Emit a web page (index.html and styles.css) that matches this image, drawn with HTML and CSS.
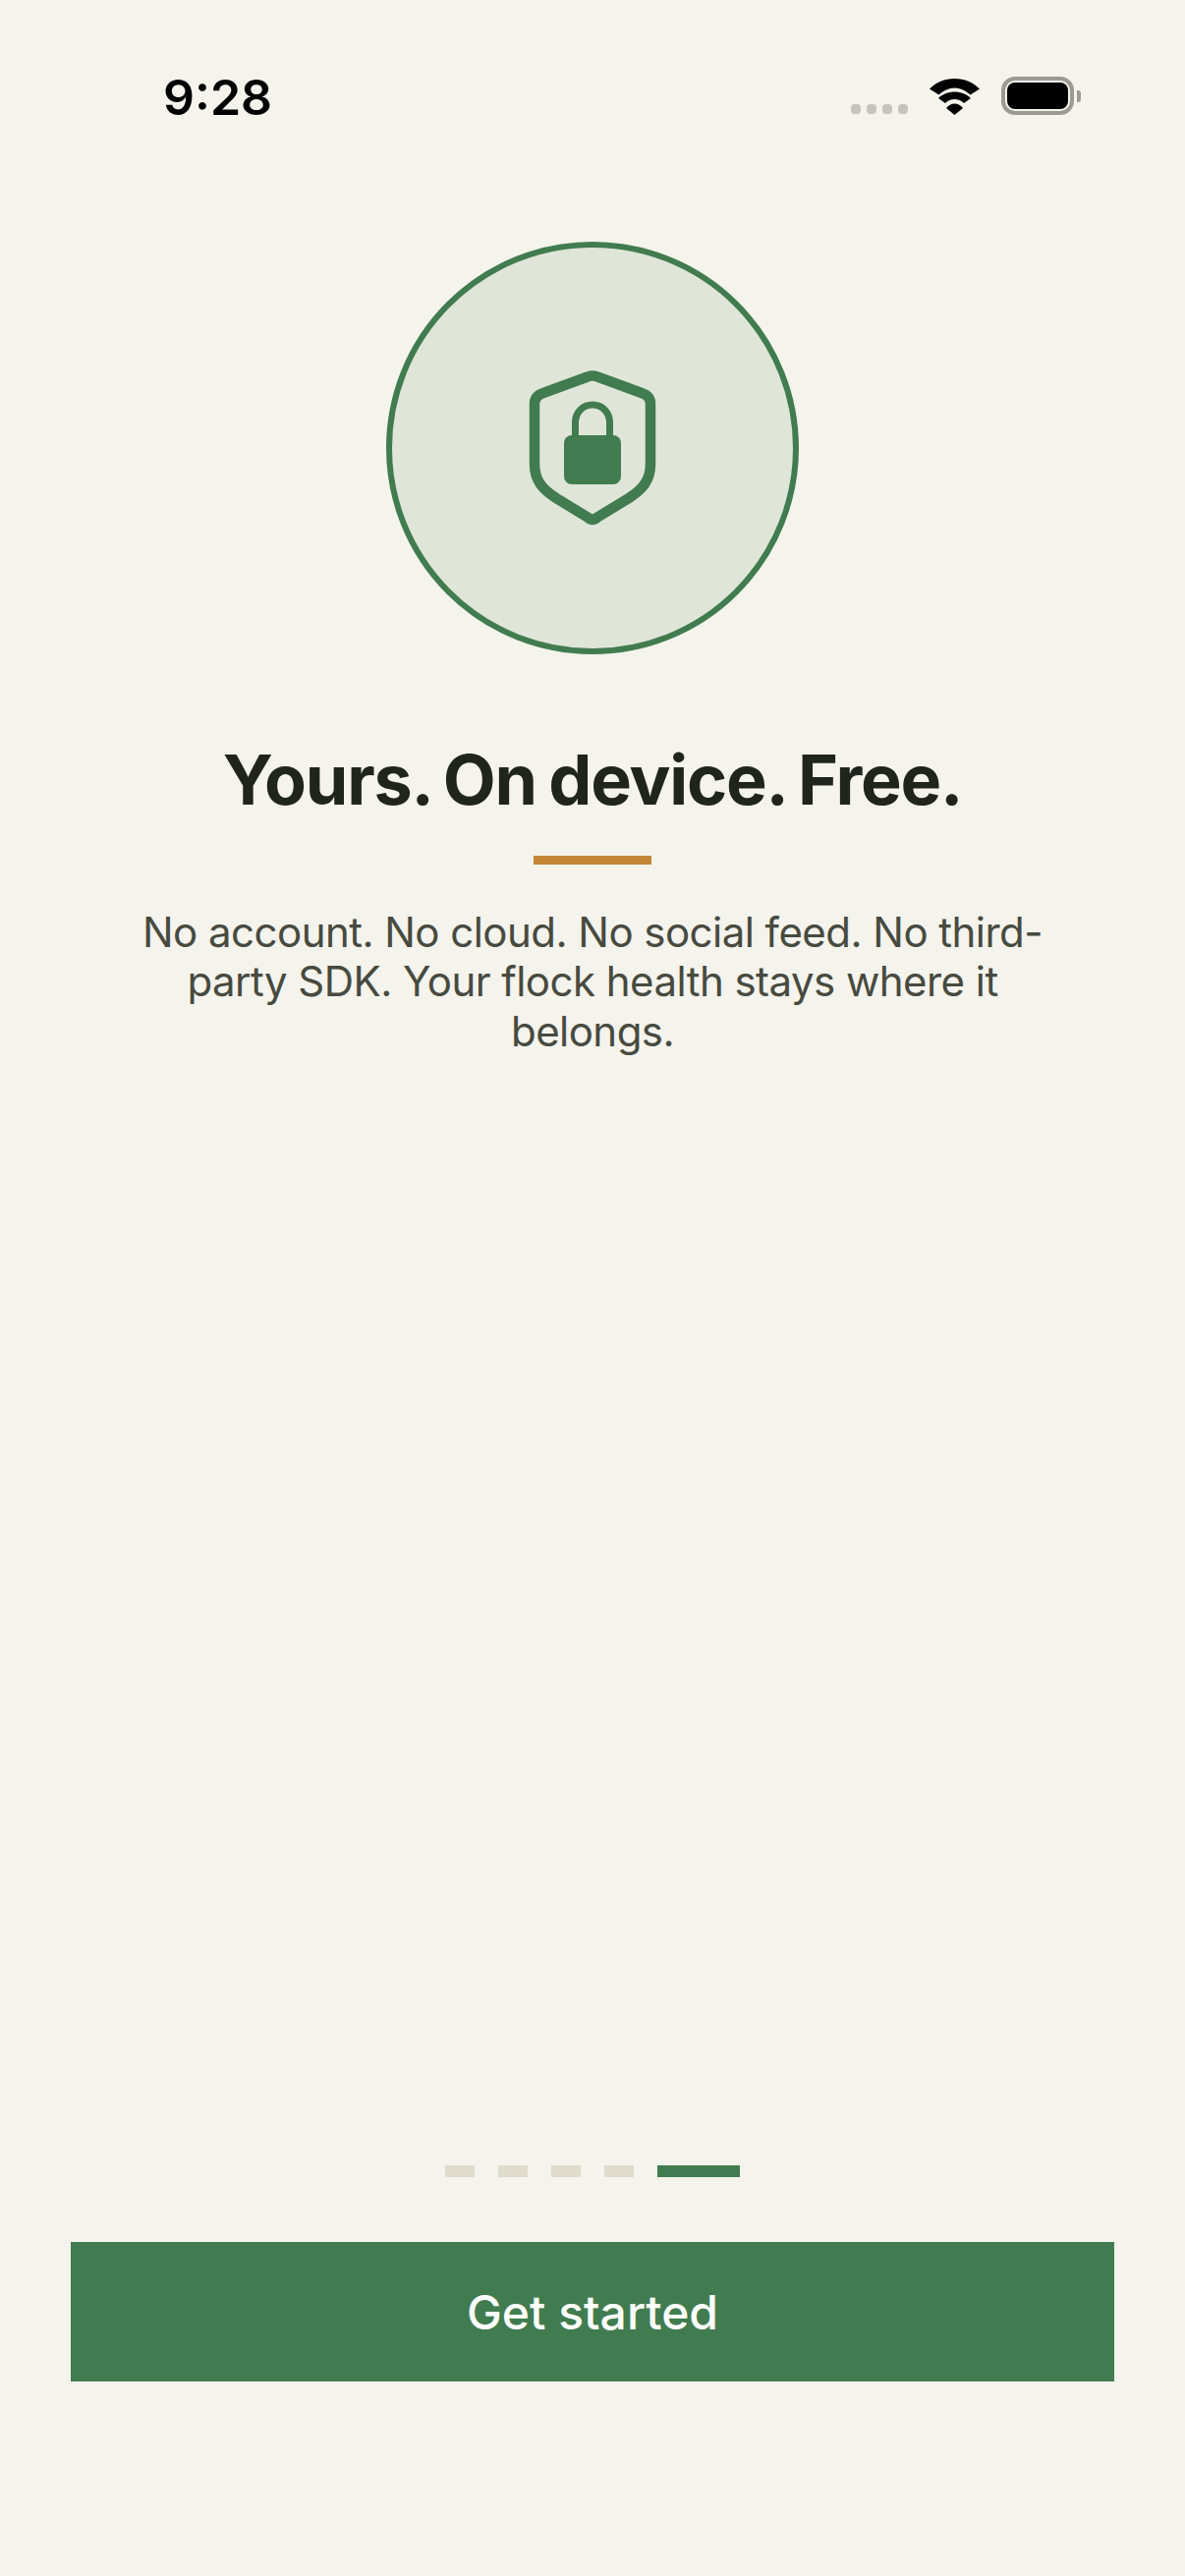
FILE: index.html
```html
<!DOCTYPE html>
<html lang="en">
<head>
  <meta charset="UTF-8">
  <title>Yours. On device. Free.</title>
  <link rel="stylesheet" href="styles.css">
</head>
<body>

  <div class="status-bar">
    <span class="time">9:28</span>
    <div class="status-icons">
      <div class="signal-dots">
        <span></span><span></span><span></span><span></span>
      </div>
      <svg class="wifi" viewBox="0 0 51 37" width="51" height="37">
        <path d="M0 10.500C6.500 4 15.500 0 25.500 0C35.500 0 44.500 4 51 10.500L41.500 16.500C37 12.500 31.500 9.500 25.500 9.500C19.500 9.500 14 12.500 9.500 16.500Z" />
        <path d="M9 20C13 16 19 13.500 25.500 13.500C32 13.500 38 16 42 20L35 25C32.500 22.500 29 21 25.500 21C22 21 18.500 22.500 16 25Z" />
        <path d="M17 30C19.500 27 22 25.500 25.500 25.500C29 25.500 31.500 27 34 30L25.500 37Z" />
      </svg>
      <div class="battery">
        <div class="battery-body"><div class="battery-fill"></div></div>
        <div class="battery-cap"></div>
      </div>
    </div>
  </div>

  <div class="content">
    <div class="hero-circle">
      <svg class="shield" viewBox="0 0 130 160" width="130" height="160">
        <path class="shield-outline" d="M6 35Q6 27 15 24L60 7.500Q65 5.500 70 7.500L115 24Q124 27 124 35V96C124 113 116 122 102 131L70 150.500Q65 155 60 150.500L28 131C14 122 6 113 6 96Z" />
        <path class="shackle" d="M47.500 68V54C47.500 44 55 36 65 36C75 36 82.500 44 82.500 54V68" />
        <rect class="lock-body" x="36" y="67" width="58" height="50" rx="8" />
      </svg>
    </div>

    <h1>Yours. On device. Free.</h1>
    <div class="accent-bar"></div>
    <p>No account. No cloud. No social feed. No third-party SDK. Your flock health stays where it belongs.</p>
  </div>

  <div class="footer">
    <div class="page-dots">
      <span class="page-dot"></span>
      <span class="page-dot"></span>
      <span class="page-dot"></span>
      <span class="page-dot"></span>
      <span class="page-dot active"></span>
    </div>
    <button>Get started</button>
  </div>

</body>
</html>
```

FILE: styles.css
```css
* {
  box-sizing: border-box;
}

body {
  font-family: Inter, "Noto Sans", sans-serif;
  background-color: #f4f3ec;
  margin: 0;
  height: 2622px;
  overflow: hidden;
  display: flex;
  flex-direction: column;
}

.status-bar {
  height: 140px;
  padding: 72px 106px 0 166px;
  display: flex;
  justify-content: space-between;
  align-items: flex-start;
}

.time {
  font-size: 50px;
  font-weight: 600;
  line-height: 54px;
  color: #000;
}

.status-icons {
  display: flex;
  align-items: flex-end;
  margin-top: 6px;
}

.signal-dots {
  display: flex;
  gap: 6px;
  margin-bottom: 1px;
  margin-right: 22px;
}

.signal-dots span {
  width: 10px;
  height: 10px;
  border-radius: 4px;
  background-color: #c4c3bc;
}

.wifi {
  fill: #000;
  margin-right: 22px;
  display: block;
}

.battery {
  display: flex;
  align-items: center;
}

.battery-body {
  width: 74px;
  height: 39px;
  padding: 2px;
  border: 4px solid #9a9a92;
  border-radius: 14px;
}

.battery-fill {
  height: 100%;
  background-color: #000;
  border-radius: 8px;
}

.battery-cap {
  width: 4px;
  height: 12px;
  margin-left: 3px;
  background-color: #9a9a92;
  border-radius: 0 3px 3px 0;
}

.content {
  flex: 1;
  display: flex;
  flex-direction: column;
  align-items: center;
  padding: 106px 138px 0;
}

.hero-circle {
  width: 420px;
  height: 420px;
  border: 6px solid #417c50;
  border-radius: 50%;
  background-color: #e0e5d9;
  display: flex;
  align-items: center;
  justify-content: center;
}

.shield-outline {
  fill: none;
  stroke: #417c50;
  stroke-width: 10.500;
  stroke-linejoin: round;
}

.shackle {
  fill: none;
  stroke: #417c50;
  stroke-width: 7;
}

.lock-body {
  fill: #417c50;
}

h1 {
  margin: 87px 0 0;
  font-size: 70px;
  font-weight: 700;
  line-height: 82px;
  letter-spacing: -1.200px;
  word-spacing: -3px;
  color: #20251b;
  text-align: center;
  white-space: nowrap;
}

.accent-bar {
  width: 120px;
  height: 9px;
  margin-top: 36px;
  background-color: #c48635;
}

p {
  margin: 44px 0 0;
  font-size: 42px;
  line-height: 50.400px;
  letter-spacing: -0.540px;
  color: #474a3e;
  text-align: center;
}

.footer {
  display: flex;
  flex-direction: column;
  align-items: center;
  padding: 0 72px 198px;
}

.page-dots {
  display: flex;
  gap: 24px;
  margin-bottom: 66px;
}

.page-dot {
  width: 30px;
  height: 12px;
  background-color: #dfdccc;
}

.page-dot.active {
  width: 84px;
  background-color: #417c50;
}

button {
  width: 100%;
  height: 142px;
  border: none;
  background-color: #417c50;
  color: #fff;
  font-family: inherit;
  font-size: 48px;
  font-weight: 550;
}
```
